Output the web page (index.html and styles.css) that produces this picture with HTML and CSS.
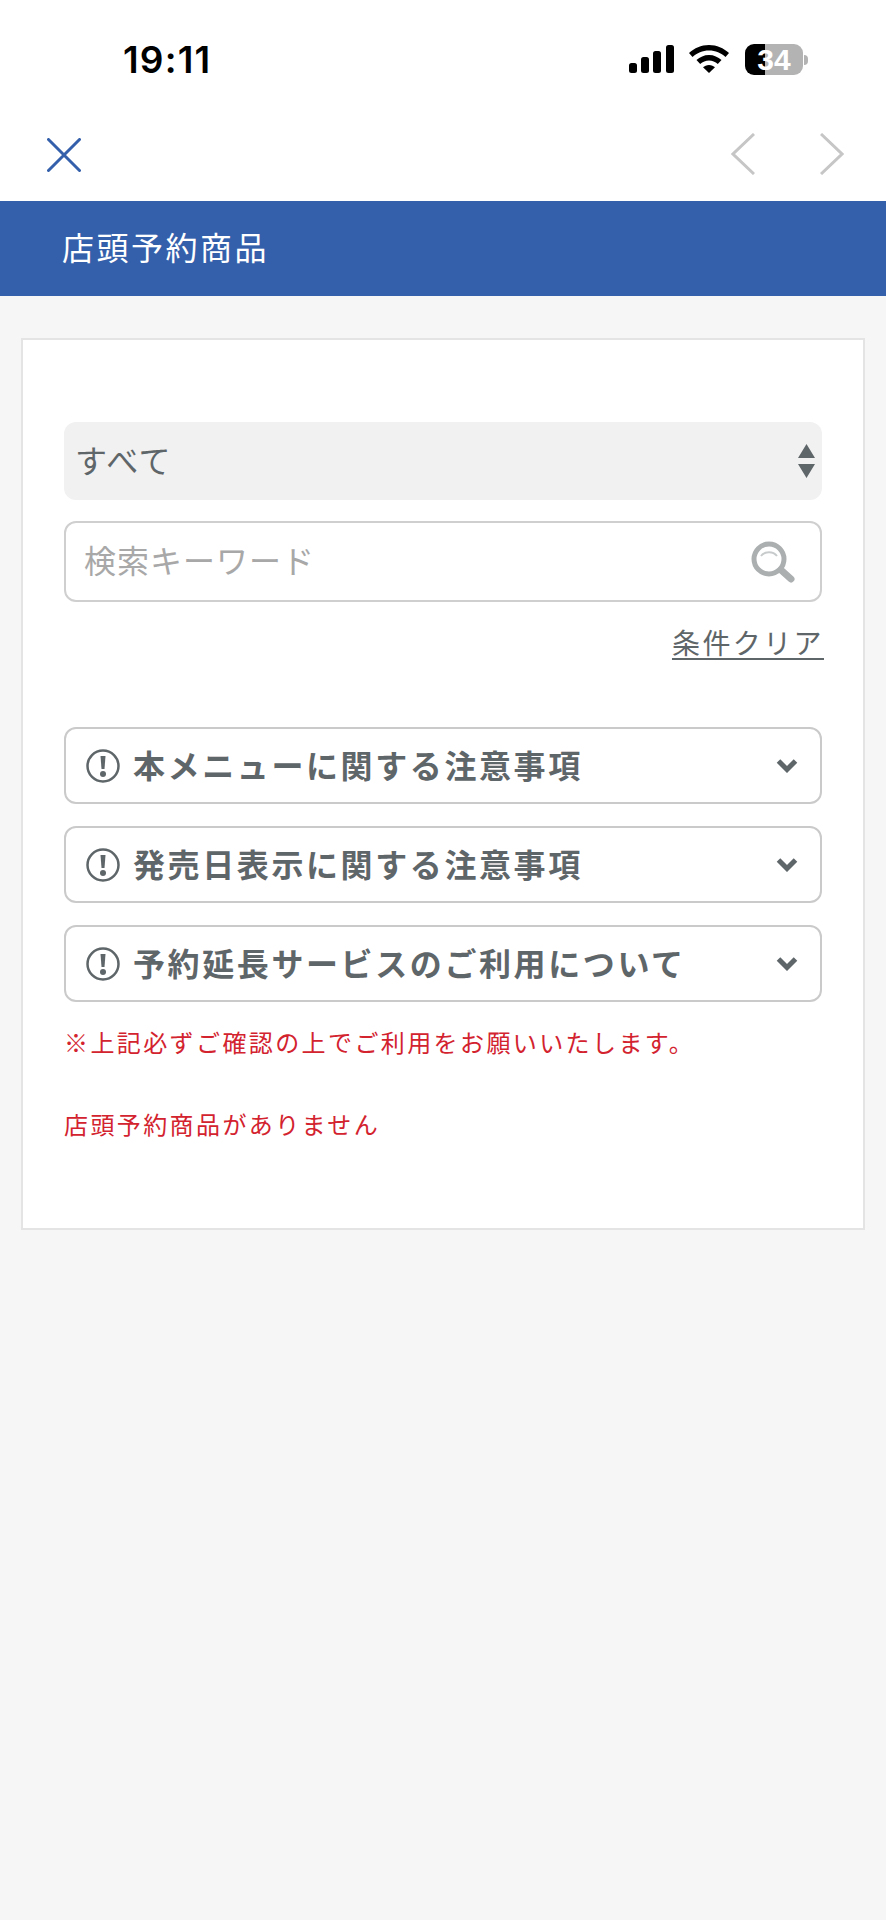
FILE: index.html
```html
<!DOCTYPE html>
<html lang="ja">
<head>
<meta charset="utf-8">
<title>店頭予約商品</title>
<link rel="stylesheet" href="styles.css">
</head>
<body>
<header class="status">
  <span class="time">19:11</span>
  <div class="status-icons">
    <svg class="signal" width="45" height="28" viewBox="0 0 45 28"><rect x="0" y="18" width="8" height="10" rx="2.5"/><rect x="12" y="12" width="8" height="16" rx="2.5"/><rect x="24" y="6" width="8" height="22" rx="2.5"/><rect x="37" y="0" width="8" height="28" rx="2.5"/></svg>
    <svg class="wifi" width="40" height="28" viewBox="0 0 40 28"><path d="M20 0C12 0 5.500 3 0 8l3.500 4C8 8 13.500 5.500 20 5.500S32 8 36.500 12L40 8C34.500 3 28 0 20 0z"/><path d="M20 10c-5 0-9 2-12.500 5l3.700 4c2.500-2.200 5.500-3.500 8.800-3.500s6.300 1.300 8.800 3.500l3.700-4C29 12 25 10 20 10z"/><path d="M20 20c-2.500 0-4.500 1-6 2.300L20 28l6-5.700C24.500 21 22.500 20 20 20z"/></svg>
    <div class="battery"><span class="battery-level">34</span><i class="battery-nub"></i></div>
  </div>
</header>
<nav class="nav">
  <svg class="close" width="34" height="34" viewBox="0 0 34 34"><path d="M1.500 1.500l31 31M32.500 1.500l-31 31" fill="none" stroke="#335fab" stroke-width="3" stroke-linecap="round"/></svg>
  <div class="pager">
    <svg width="24" height="42" viewBox="0 0 24 42"><path d="M23 1L2 21l21 20" fill="none" stroke="#c6c6c6" stroke-width="3"/></svg>
    <svg width="24" height="42" viewBox="0 0 24 42"><path d="M1 1l21 20L1 41" fill="none" stroke="#c6c6c6" stroke-width="3"/></svg>
  </div>
</nav>
<h1 class="band">店頭予約商品</h1>
<main class="page">
  <section class="card">
    <div class="select">
      <span class="select-value">すべて</span>
      <svg width="17" height="34" viewBox="0 0 17 34"><path d="M8.500 0L17 14H0zM0 20h17L8.500 34z" fill="#5f6669"/></svg>
    </div>
    <div class="search">
      <span class="placeholder">検索キーワード</span>
      <svg width="44" height="42" viewBox="0 0 44 42"><circle cx="18" cy="18" r="15" fill="none" stroke="#abafb0" stroke-width="5"/><path d="M30 29l10 9" stroke="#abafb0" stroke-width="7" stroke-linecap="round"/><path d="M10 15c4-5 12-5 16 0" fill="none" stroke="#c8cbcc" stroke-width="2"/></svg>
    </div>
    <div class="clear-row"><a class="clear">条件クリア</a></div>
    <div class="notes">
      <div class="note">
        <svg class="alert" width="34" height="34" viewBox="0 0 34 34"><circle cx="17" cy="17" r="15.500" fill="none" stroke="#5f6669" stroke-width="2.500"/><path d="M14.500 7h5l-1 13h-3z" fill="#5f6669"/><circle cx="17" cy="25" r="3" fill="#5f6669"/></svg>
        <span class="note-title">本メニューに関する注意事項</span>
        <svg class="chev" width="22" height="15" viewBox="0 0 22 15"><path d="M2.500 3L11 11.500 19.500 3" fill="none" stroke="#5f6669" stroke-width="5"/></svg>
      </div>
      <div class="note">
        <svg class="alert" width="34" height="34" viewBox="0 0 34 34"><circle cx="17" cy="17" r="15.500" fill="none" stroke="#5f6669" stroke-width="2.500"/><path d="M14.500 7h5l-1 13h-3z" fill="#5f6669"/><circle cx="17" cy="25" r="3" fill="#5f6669"/></svg>
        <span class="note-title">発売日表示に関する注意事項</span>
        <svg class="chev" width="22" height="15" viewBox="0 0 22 15"><path d="M2.500 3L11 11.500 19.500 3" fill="none" stroke="#5f6669" stroke-width="5"/></svg>
      </div>
      <div class="note">
        <svg class="alert" width="34" height="34" viewBox="0 0 34 34"><circle cx="17" cy="17" r="15.500" fill="none" stroke="#5f6669" stroke-width="2.500"/><path d="M14.500 7h5l-1 13h-3z" fill="#5f6669"/><circle cx="17" cy="25" r="3" fill="#5f6669"/></svg>
        <span class="note-title">予約延長サービスのご利用について</span>
        <svg class="chev" width="22" height="15" viewBox="0 0 22 15"><path d="M2.500 3L11 11.500 19.500 3" fill="none" stroke="#5f6669" stroke-width="5"/></svg>
      </div>
    </div>
    <p class="red confirm">※上記必ずご確認の上でご利用をお願いいたします。</p>
    <p class="red empty">店頭予約商品がありません</p>
  </section>
</main>
</body>
</html>
```
FILE: styles.css
```css
* { box-sizing: border-box; }
html, body { margin: 0; padding: 0; }
body {
  width: 886px;
  min-height: 1920px;
  background: #f6f6f6;
  font-family: "Noto Sans CJK JP", "Noto Sans", sans-serif;
  color: #5f6669;
}
.status {
  height: 120px;
  background: #fff;
  display: flex;
  justify-content: space-between;
  align-items: flex-start;
  padding: 38px 78px 0 123px;
}
.time {
  font-family: Inter, "Liberation Sans", sans-serif;
  font-size: 37px;
  line-height: 44px;
  font-weight: 600;
  letter-spacing: 1.200px;
  color: #000;
}
.status-icons {
  display: flex;
  align-items: flex-start;
  padding-top: 7px;
}
.signal { display: block; margin-right: 15px; }
.wifi { display: block; margin-right: 16px; }
.battery {
  display: flex;
  align-items: center;
  margin-top: -1px;
}
.battery-level {
  display: block;
  width: 58px;
  height: 31px;
  border-radius: 9px;
  background: linear-gradient(90deg, #000 35%, #b3b3b3 35%);
  color: #fff;
  font-family: "Liberation Sans", sans-serif;
  font-size: 30px;
  line-height: 31px;
  font-weight: 700;
  text-align: center;
}
.battery-nub {
  display: block;
  width: 4px;
  height: 10px;
  margin-left: 1px;
  background: #b3b3b3;
  border-radius: 0 4px 4px 0;
}
.nav {
  height: 81px;
  background: #fff;
  display: flex;
  justify-content: space-between;
  align-items: flex-start;
  padding: 18px 42px 0 47px;
}
.close { display: block; }
.pager { display: flex; gap: 65px; margin-top: -5px; }
.pager svg { display: block; }
.band {
  margin: 0;
  height: 95px;
  background: #335fab;
  color: #fff;
  font-size: 32px;
  font-weight: 400;
  line-height: 90px;
  letter-spacing: 2.500px;
  padding-left: 62px;
}
.page { padding: 42px 21px 0; }
.card {
  width: 844px;
  height: 892px;
  background: #fff;
  border: 2px solid #e4e4e4;
  padding: 82px 41px 0;
}
.select {
  height: 78px;
  background: #f1f1f1;
  border-radius: 12px;
  display: flex;
  align-items: center;
  justify-content: space-between;
  padding: 0 7px 0 12px;
}
.select-value {
  font-size: 32px;
  letter-spacing: 1.500px;
  margin-left: -1px;
  padding-bottom: 5px;
}
.select svg { display: block; }
.search {
  margin-top: 21px;
  height: 81px;
  border: 2px solid #cfcfcf;
  border-radius: 12px;
  display: flex;
  align-items: center;
  justify-content: space-between;
  padding: 0 25px 0 18px;
}
.placeholder {
  font-size: 32px;
  color: #a8a8a8;
  letter-spacing: 1px;
  padding-bottom: 5px;
}
.clear-row {
  display: flex;
  justify-content: flex-end;
  margin-top: 20px;
}
.clear {
  font-size: 28px;
  line-height: 40px;
  letter-spacing: 2.400px;
  margin-right: -2px;
  text-decoration: underline;
  text-underline-offset: 4px;
  text-decoration-thickness: 2px;
}
.notes {
  margin-top: 65px;
  display: flex;
  flex-direction: column;
  gap: 22px;
}
.note {
  height: 77px;
  border: 2px solid #cacaca;
  border-radius: 12px;
  display: flex;
  align-items: center;
  padding: 0 22px 0 20px;
}
.alert { flex: none; display: block; }
.note-title {
  flex: 1;
  margin-left: 13px;
  font-size: 32px;
  font-weight: 700;
  letter-spacing: 2.600px;
  white-space: nowrap;
  padding-bottom: 4px;
}
.chev { flex: none; display: block; }
.red {
  margin: 0;
  color: #d3232f;
  font-size: 24px;
  line-height: 36px;
  letter-spacing: 2.400px;
  white-space: nowrap;
}
.confirm { margin-top: 22px; }
.empty { margin-top: 46px; }
```
